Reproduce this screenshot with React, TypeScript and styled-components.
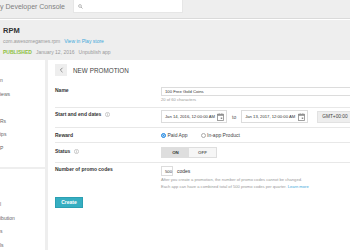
import React from 'react';
import styled, { createGlobalStyle } from 'styled-components';

const GlobalStyle = createGlobalStyle`
  html, body {
    margin: 0;
    padding: 0;
    background: #eeeeee;
    font-family: "Liberation Sans", Arial, sans-serif;
    color: #333;
    overflow: hidden;
  }
`;

const Page = styled.div`
  width: 350px;
  height: 250px;
  overflow: hidden;
  background: #eeeeee;
`;

const TopBar = styled.div`
  height: 18px;
  display: flex;
  align-items: flex-start;
  gap: 8px;
  border-bottom: 1px solid #dadada;
`;

const Brand = styled.div`
  height: 13px;
  line-height: 13px;
  font-size: 7px;
  color: #808080;
  white-space: nowrap;
`;

const Search = styled.div`
  width: 110px;
  height: 13px;
  background: #fff;
  border: 1px solid #e6e6e6;
  border-top: none;
  box-sizing: border-box;
  display: flex;
  align-items: center;
  padding-left: 4px;
`;

const AppHeader = styled.div`
  border-top: 1px solid #fff;
  padding: 6px 3px 0;
  height: 40px;
  box-sizing: border-box;
`;

const AppName = styled.div`
  font-size: 7.5px;
  font-weight: bold;
  color: #333;
  line-height: 10px;
`;

const Meta = styled.div`
  font-size: 5px;
  line-height: 10px;
  color: #999;
  display: flex;
  gap: 4px;
  white-space: nowrap;
  & + & {
    margin-top: 1px;
  }
`;

const Link = styled.span`
  color: #3ea8da;
`;

const Published = styled.span`
  color: #8cbf3f;
  font-weight: bold;
`;

const Body = styled.div`
  display: grid;
  grid-template-columns: 45px 1fr;
  gap: 3px;
  padding-top: 1px;
`;

const SideCol = styled.div`
  display: flex;
  flex-direction: column;
  gap: 2px;
`;

const SideCard = styled.div<{ $top: number; $height: number }>`
  background: #fff;
  height: ${p => p.$height}px;
  padding-top: ${p => p.$top}px;
  box-sizing: border-box;
`;

const NavItem = styled.div`
  height: 13.5px;
  line-height: 13.5px;
  font-size: 5px;
  color: #666;
  white-space: nowrap;
`;

const Main = styled.div`
  background: #fff;
  height: 190px;
  padding: 4px 0 0 7px;
  overflow: hidden;
`;

const Header = styled.div`
  display: flex;
  align-items: center;
  gap: 6px;
  height: 12px;
  margin-bottom: 8px;
`;

const BackButton = styled.div`
  width: 12px;
  height: 12px;
  background: #eeeeee;
  display: flex;
  align-items: center;
  justify-content: center;
`;

const Title = styled.div`
  font-size: 6.3px;
  color: #444;
  letter-spacing: 0.05px;
`;

const Row = styled.div<{ $pt: number; $pb: number; $last?: boolean }>`
  display: grid;
  grid-template-columns: 106px 1fr;
  align-items: start;
  padding: ${p => p.$pt}px 0 ${p => p.$pb}px;
  border-bottom: ${p => (p.$last ? 'none' : '1px solid #e8e8e8')};
`;

const Label = styled.div`
  font-size: 5px;
  font-weight: bold;
  color: #333;
  line-height: 6px;
  display: flex;
  align-items: center;
  gap: 4px;
  white-space: nowrap;
`;

const Field = styled.div`
  display: flex;
  flex-direction: column;
`;

const TextInput = styled.div<{ $w: number; $h: number }>`
  width: ${p => p.$w}px;
  height: ${p => p.$h}px;
  border: 1px solid #dcdcdc;
  box-sizing: border-box;
  font-size: 4.2px;
  color: #333;
  display: flex;
  align-items: center;
  justify-content: space-between;
  padding: 0 2px 0 3px;
  white-space: nowrap;
`;

const Help = styled.div`
  font-size: 4.1px;
  color: #999;
  line-height: 7px;
  white-space: nowrap;
`;

const Inline = styled.div<{ $gap: number }>`
  display: flex;
  align-items: center;
  gap: ${p => p.$gap}px;
  white-space: nowrap;
`;

const SmallText = styled.span`
  font-size: 5px;
  color: #555;
`;

const Gmt = styled.div`
  height: 12px;
  width: 40px;
  margin-left: 4px;
  background: #eeeeee;
  border: 1px solid #e2e2e2;
  box-sizing: border-box;
  font-size: 4.8px;
  color: #444;
  display: flex;
  align-items: center;
  padding-left: 4px;
`;

const Radio = styled.span<{ $on?: boolean }>`
  width: 5px;
  height: 5px;
  border-radius: 50%;
  box-sizing: border-box;
  border: 1px solid ${p => (p.$on ? '#2f8fe3' : '#aaa')};
  background: ${p => (p.$on ? '#2f8fe3' : '#fff')};
  box-shadow: ${p => (p.$on ? 'inset 0 0 0 0.6px #fff' : 'none')};
  margin-right: 1.5px;
`;

const Choice = styled.span`
  display: flex;
  align-items: center;
  font-size: 5px;
  color: #444;
  line-height: 6px;
`;

const Toggle = styled.div`
  display: flex;
  border: 1px solid #dedede;
  width: 56px;
  height: 11px;
  box-sizing: border-box;
`;

const ToggleSeg = styled.div<{ $active?: boolean }>`
  flex: 1;
  background: ${p => (p.$active ? '#dedede' : '#f6f6f6')};
  font-size: 4.4px;
  font-weight: bold;
  color: ${p => (p.$active ? '#333' : '#666')};
  display: flex;
  align-items: center;
  justify-content: center;
`;

const CreateButton = styled.button`
  margin-top: 3px;
  width: 28px;
  height: 11px;
  padding: 0;
  background: #36aec1;
  border: 1px solid #2b9fb2;
  color: #fff;
  font-family: inherit;
  font-size: 5px;
  font-weight: bold;
  cursor: pointer;
`;

const InfoIcon = () => (
  <svg width="5" height="5" viewBox="0 0 10 10">
    <circle cx="5" cy="5" r="4.2" fill="none" stroke="#b5b5b5" strokeWidth="1.4" />
    <rect x="4.3" y="4.2" width="1.4" height="3.2" fill="#b5b5b5" />
    <rect x="4.3" y="2.4" width="1.4" height="1.2" fill="#b5b5b5" />
  </svg>
);

const CalendarIcon = () => (
  <svg width="7" height="8" viewBox="0 0 14 16">
    <rect x="1" y="2.5" width="12" height="12.5" fill="none" stroke="#8a8a8a" strokeWidth="1.6" />
    <rect x="1" y="2.5" width="12" height="3" fill="#8a8a8a" />
    <rect x="7.5" y="9" width="3" height="3" fill="#8a8a8a" />
    <rect x="3.5" y="0.5" width="1.5" height="3" fill="#8a8a8a" />
    <rect x="9" y="0.5" width="1.5" height="3" fill="#8a8a8a" />
  </svg>
);

const SearchIcon = () => (
  <svg width="5" height="5" viewBox="0 0 10 10">
    <circle cx="4" cy="4" r="2.8" fill="none" stroke="#9a9a9a" strokeWidth="1.3" />
    <line x1="6" y1="6" x2="9" y2="9" stroke="#9a9a9a" strokeWidth="1.5" />
  </svg>
);

const navTop = ['n', 'iews', '', 'Rs', 'ips', 'P'];
const navBottom = ['l', 'ibution', 's', 'ls'];

const App = () => {
  return (
    <Page>
      <GlobalStyle />
      <TopBar>
        <Brand>y Developer Console</Brand>
        <Search>
          <SearchIcon />
        </Search>
      </TopBar>
      <AppHeader>
        <AppName>RPM</AppName>
        <Meta>
          <span>com.awesomegames.rpm</span>
          <Link>View in Play store</Link>
        </Meta>
        <Meta>
          <Published>PUBLISHED</Published>
          <span>January 12, 2016</span>
          <span>Unpublish app</span>
        </Meta>
      </AppHeader>
      <Body>
        <SideCol>
          <SideCard $top={14} $height={107}>
            {navTop.map((item, i) => (
              <NavItem key={i}>{item}</NavItem>
            ))}
          </SideCard>
          <SideCard $top={29} $height={90}>
            {navBottom.map((item, i) => (
              <NavItem key={i}>{item}</NavItem>
            ))}
          </SideCard>
        </SideCol>
        <Main>
          <Header>
            <BackButton>
              <svg width="5" height="6" viewBox="0 0 5 6">
                <path d="M3.5 0.8 L1.3 3 L3.5 5.2" fill="none" stroke="#777" strokeWidth="0.8" />
              </svg>
            </BackButton>
            <Title>NEW PROMOTION</Title>
          </Header>

          <Row $pt={3} $pb={4}>
            <Label>Name</Label>
            <Field>
              <TextInput $w={200} $h={9}>100 Free Gold Coins</TextInput>
              <Help>20 of 60 characters</Help>
            </Field>
          </Row>

          <Row $pt={2} $pb={4}>
            <Label style={{ marginTop: 1 }}>
              Start and end dates <InfoIcon />
            </Label>
            <Inline $gap={5}>
              <TextInput $w={66} $h={13}>
                Jan 14, 2016, 12:00:00 AM
                <CalendarIcon />
              </TextInput>
              <SmallText>to</SmallText>
              <TextInput $w={67} $h={13}>
                Jan 13, 2017, 12:00:00 AM
                <CalendarIcon />
              </TextInput>
              <Gmt>GMT+00:00</Gmt>
            </Inline>
          </Row>

          <Row $pt={4} $pb={4}>
            <Label>Reward</Label>
            <Inline $gap={13}>
              <Choice>
                <Radio $on />
                Paid App
              </Choice>
              <Choice>
                <Radio />
                In-app Product
              </Choice>
            </Inline>
          </Row>

          <Row $pt={4} $pb={4}>
            <Label style={{ marginTop: 1 }}>
              Status <InfoIcon />
            </Label>
            <Toggle>
              <ToggleSeg $active>ON</ToggleSeg>
              <ToggleSeg>OFF</ToggleSeg>
            </Toggle>
          </Row>

          <Row $pt={3} $pb={0} $last>
            <Label>Number of promo codes</Label>
            <Field>
              <Inline $gap={4}>
                <TextInput $w={12} $h={10}>500</TextInput>
                <SmallText style={{ color: '#333' }}>codes</SmallText>
              </Inline>
              <Help>After you create a promotion, the number of promo codes cannot be changed.</Help>
              <Help>
                Each app can have a combined total of 500 promo codes per quarter. <Link>Learn more</Link>
              </Help>
            </Field>
          </Row>

          <CreateButton>Create</CreateButton>
        </Main>
      </Body>
    </Page>
  );
};

export default App;
